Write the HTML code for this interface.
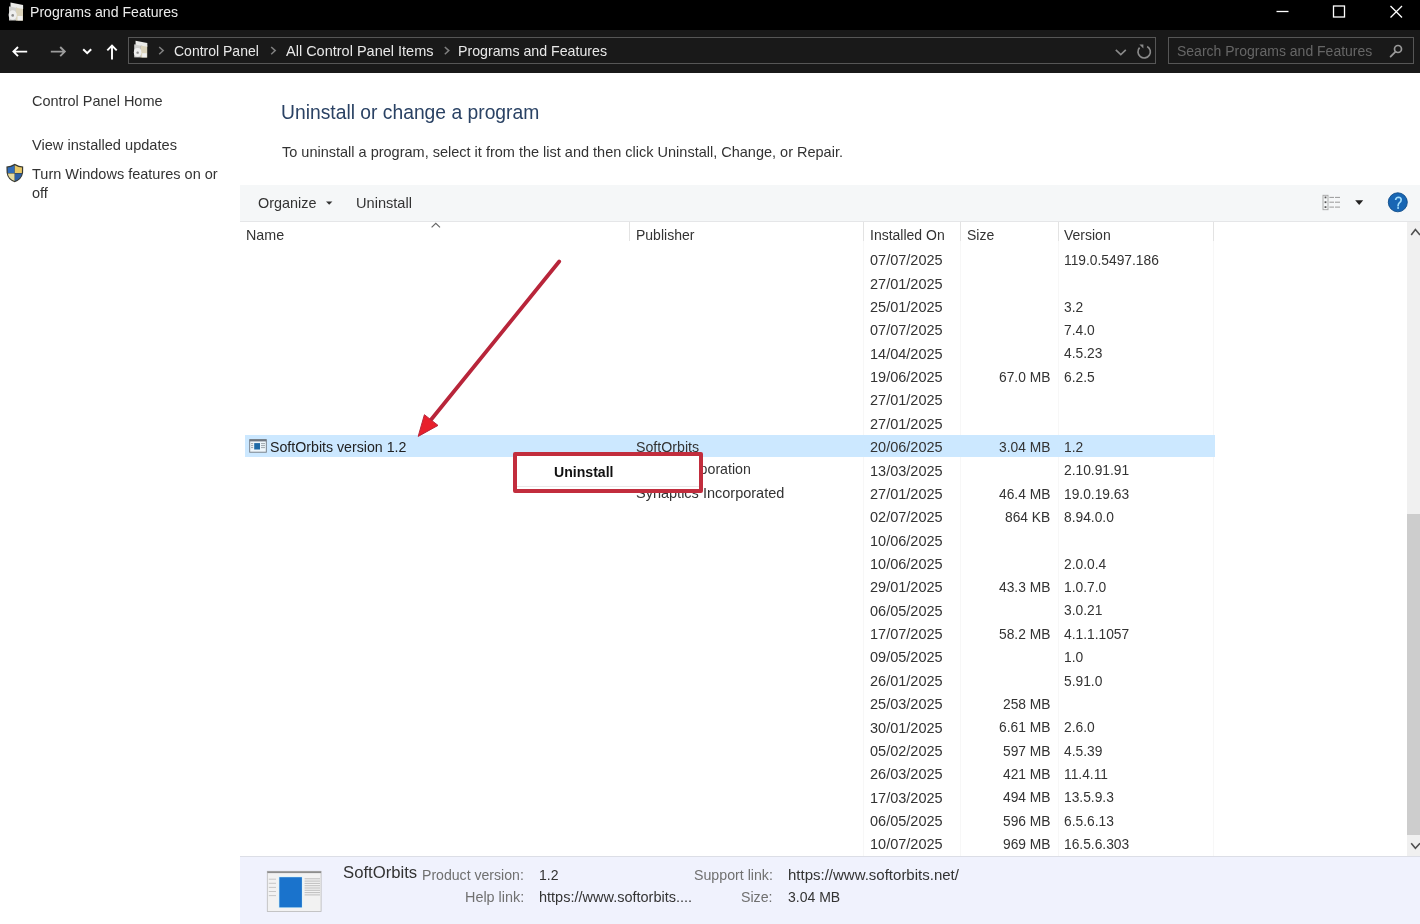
<!DOCTYPE html>
<html><head><meta charset="utf-8"><title>Programs and Features</title>
<style>
html,body{margin:0;padding:0;}
body{width:1420px;height:924px;overflow:hidden;position:relative;background:#fff;font-family:"Liberation Sans",sans-serif;}
.t{position:absolute;white-space:pre;will-change:transform;}
.r{position:absolute;}
svg{position:absolute;overflow:visible;}
</style></head><body>
<div class="r" style="left:0px;top:0px;width:1420px;height:30px;background:#000;"></div>
<div class="r" style="left:0px;top:30px;width:1420px;height:42.6px;background:#191919;"></div>
<div class="t" style="left:29.50px;top:4.21px;font-size:14.1px;line-height:17px;color:#ececec;">Programs and Features</div>
<svg style="left:0;top:0" width="1420" height="30"><line x1="1276.5" y1="11.5" x2="1288.5" y2="11.5" stroke="#fff" stroke-width="1.3"/><rect x="1333.5" y="6" width="11" height="11" fill="none" stroke="#fff" stroke-width="1.3"/><path d="M1390.5 6 L1402 17.5 M1402 6 L1390.5 17.5" stroke="#fff" stroke-width="1.3"/></svg>
<div class="r" style="left:127.5px;top:37px;width:1026px;height:25px;border:1px solid #565656;"></div>
<div class="r" style="left:1168px;top:37px;width:244px;height:25px;border:1px solid #565656;"></div>
<div class="t" style="left:174.00px;top:42.75px;font-size:14px;line-height:17px;color:#e8e8e8;">Control Panel</div>
<div class="t" style="left:286.00px;top:42.58px;font-size:14.5px;line-height:17px;color:#e8e8e8;">All Control Panel Items</div>
<div class="t" style="left:458.00px;top:42.68px;font-size:14.2px;line-height:17px;color:#e8e8e8;">Programs and Features</div>
<div class="t" style="left:1177.30px;top:42.85px;font-size:14px;line-height:17px;color:#666;">Search Programs and Features</div>
<div class="t" style="left:32.00px;top:92.58px;font-size:14.5px;line-height:17px;color:#333;">Control Panel Home</div>
<div class="t" style="left:32.00px;top:135.94px;font-size:14.6px;line-height:18px;color:#333;">View installed updates</div>
<div class="t" style="left:32.00px;top:166.08px;font-size:14.5px;line-height:17px;color:#333;">Turn Windows features on or</div>
<div class="t" style="left:32.00px;top:184.68px;font-size:14.5px;line-height:17px;color:#333;">off</div>
<div class="t" style="left:281.30px;top:101.21px;font-size:19.3px;line-height:23px;color:#2a4264;">Uninstall or change a program</div>
<div class="t" style="left:282.00px;top:143.98px;font-size:14.5px;line-height:17px;color:#333;">To uninstall a program, select it from the list and then click Uninstall, Change, or Repair.</div>
<div class="r" style="left:240px;top:184.5px;width:1180px;height:36.5px;background:#f5f7f8;"></div>
<div class="r" style="left:240px;top:221px;width:1180px;height:1px;background:#e5e6e8;"></div>
<div class="t" style="left:258.00px;top:194.91px;font-size:14.4px;line-height:17px;color:#333;">Organize</div>
<div class="t" style="left:355.60px;top:194.34px;font-size:14.6px;line-height:18px;color:#333;">Uninstall</div>
<div class="t" style="left:245.60px;top:226.95px;font-size:14.3px;line-height:17px;color:#333;">Name</div>
<div class="t" style="left:635.50px;top:227.45px;font-size:14px;line-height:17px;color:#333;">Publisher</div>
<div class="t" style="left:870.00px;top:227.05px;font-size:14px;line-height:17px;color:#333;">Installed On</div>
<div class="t" style="left:967.00px;top:227.05px;font-size:14px;line-height:17px;color:#333;">Size</div>
<div class="t" style="left:1064.00px;top:227.05px;font-size:14px;line-height:17px;color:#333;">Version</div>
<div class="r" style="left:629.1px;top:221.5px;width:1px;height:19px;background:#e3e3e3;"></div>
<div class="r" style="left:863.1px;top:221.5px;width:1px;height:19px;background:#e3e3e3;"></div>
<div class="r" style="left:863.1px;top:240.5px;width:1px;height:615px;background:#f7f7f7;"></div>
<div class="r" style="left:959.7px;top:221.5px;width:1px;height:19px;background:#e3e3e3;"></div>
<div class="r" style="left:959.7px;top:240.5px;width:1px;height:615px;background:#f7f7f7;"></div>
<div class="r" style="left:1058.1px;top:221.5px;width:1px;height:19px;background:#e3e3e3;"></div>
<div class="r" style="left:1058.1px;top:240.5px;width:1px;height:615px;background:#f7f7f7;"></div>
<div class="r" style="left:1213.1px;top:221.5px;width:1px;height:19px;background:#e3e3e3;"></div>
<div class="r" style="left:1213.1px;top:240.5px;width:1px;height:615px;background:#f7f7f7;"></div>
<div class="r" style="left:244.5px;top:435px;width:970px;height:22px;background:#cce8ff;"></div>
<div class="t" style="left:870.00px;top:252.18px;font-size:14.5px;line-height:17px;color:#333;">07/07/2025</div>
<div class="t" style="left:1064.00px;top:251.92px;font-size:13.8px;line-height:17px;color:#333;">119.0.5497.186</div>
<div class="t" style="left:870.00px;top:275.55px;font-size:14.5px;line-height:17px;color:#333;">27/01/2025</div>
<div class="t" style="left:870.00px;top:298.92px;font-size:14.5px;line-height:17px;color:#333;">25/01/2025</div>
<div class="t" style="left:1064.00px;top:298.66px;font-size:13.8px;line-height:17px;color:#333;">3.2</div>
<div class="t" style="left:870.00px;top:322.29px;font-size:14.5px;line-height:17px;color:#333;">07/07/2025</div>
<div class="t" style="left:1064.00px;top:322.03px;font-size:13.8px;line-height:17px;color:#333;">7.4.0</div>
<div class="t" style="left:870.00px;top:345.66px;font-size:14.5px;line-height:17px;color:#333;">14/04/2025</div>
<div class="t" style="left:1064.00px;top:345.40px;font-size:13.8px;line-height:17px;color:#333;">4.5.23</div>
<div class="t" style="left:870.00px;top:369.03px;font-size:14.5px;line-height:17px;color:#333;">19/06/2025</div>
<div class="t" style="right:369.50px;top:368.77px;font-size:13.8px;line-height:17px;color:#333;">67.0 MB</div>
<div class="t" style="left:1064.00px;top:368.77px;font-size:13.8px;line-height:17px;color:#333;">6.2.5</div>
<div class="t" style="left:870.00px;top:392.40px;font-size:14.5px;line-height:17px;color:#333;">27/01/2025</div>
<div class="t" style="left:870.00px;top:415.77px;font-size:14.5px;line-height:17px;color:#333;">27/01/2025</div>
<div class="t" style="left:870.00px;top:439.14px;font-size:14.5px;line-height:17px;color:#333;">20/06/2025</div>
<div class="t" style="right:369.50px;top:438.88px;font-size:13.8px;line-height:17px;color:#333;">3.04 MB</div>
<div class="t" style="left:1064.00px;top:438.88px;font-size:13.8px;line-height:17px;color:#333;">1.2</div>
<div class="t" style="left:870.00px;top:462.51px;font-size:14.5px;line-height:17px;color:#333;">13/03/2025</div>
<div class="t" style="left:1064.00px;top:462.25px;font-size:13.8px;line-height:17px;color:#333;">2.10.91.91</div>
<div class="t" style="left:870.00px;top:485.88px;font-size:14.5px;line-height:17px;color:#333;">27/01/2025</div>
<div class="t" style="right:369.50px;top:485.62px;font-size:13.8px;line-height:17px;color:#333;">46.4 MB</div>
<div class="t" style="left:1064.00px;top:485.62px;font-size:13.8px;line-height:17px;color:#333;">19.0.19.63</div>
<div class="t" style="left:870.00px;top:509.25px;font-size:14.5px;line-height:17px;color:#333;">02/07/2025</div>
<div class="t" style="right:369.50px;top:508.99px;font-size:13.8px;line-height:17px;color:#333;">864 KB</div>
<div class="t" style="left:1064.00px;top:508.99px;font-size:13.8px;line-height:17px;color:#333;">8.94.0.0</div>
<div class="t" style="left:870.00px;top:532.62px;font-size:14.5px;line-height:17px;color:#333;">10/06/2025</div>
<div class="t" style="left:870.00px;top:555.99px;font-size:14.5px;line-height:17px;color:#333;">10/06/2025</div>
<div class="t" style="left:1064.00px;top:555.73px;font-size:13.8px;line-height:17px;color:#333;">2.0.0.4</div>
<div class="t" style="left:870.00px;top:579.36px;font-size:14.5px;line-height:17px;color:#333;">29/01/2025</div>
<div class="t" style="right:369.50px;top:579.10px;font-size:13.8px;line-height:17px;color:#333;">43.3 MB</div>
<div class="t" style="left:1064.00px;top:579.10px;font-size:13.8px;line-height:17px;color:#333;">1.0.7.0</div>
<div class="t" style="left:870.00px;top:602.73px;font-size:14.5px;line-height:17px;color:#333;">06/05/2025</div>
<div class="t" style="left:1064.00px;top:602.47px;font-size:13.8px;line-height:17px;color:#333;">3.0.21</div>
<div class="t" style="left:870.00px;top:626.10px;font-size:14.5px;line-height:17px;color:#333;">17/07/2025</div>
<div class="t" style="right:369.50px;top:625.84px;font-size:13.8px;line-height:17px;color:#333;">58.2 MB</div>
<div class="t" style="left:1064.00px;top:625.84px;font-size:13.8px;line-height:17px;color:#333;">4.1.1.1057</div>
<div class="t" style="left:870.00px;top:649.47px;font-size:14.5px;line-height:17px;color:#333;">09/05/2025</div>
<div class="t" style="left:1064.00px;top:649.21px;font-size:13.8px;line-height:17px;color:#333;">1.0</div>
<div class="t" style="left:870.00px;top:672.84px;font-size:14.5px;line-height:17px;color:#333;">26/01/2025</div>
<div class="t" style="left:1064.00px;top:672.58px;font-size:13.8px;line-height:17px;color:#333;">5.91.0</div>
<div class="t" style="left:870.00px;top:696.21px;font-size:14.5px;line-height:17px;color:#333;">25/03/2025</div>
<div class="t" style="right:369.50px;top:695.95px;font-size:13.8px;line-height:17px;color:#333;">258 MB</div>
<div class="t" style="left:870.00px;top:719.58px;font-size:14.5px;line-height:17px;color:#333;">30/01/2025</div>
<div class="t" style="right:369.50px;top:719.32px;font-size:13.8px;line-height:17px;color:#333;">6.61 MB</div>
<div class="t" style="left:1064.00px;top:719.32px;font-size:13.8px;line-height:17px;color:#333;">2.6.0</div>
<div class="t" style="left:870.00px;top:742.95px;font-size:14.5px;line-height:17px;color:#333;">05/02/2025</div>
<div class="t" style="right:369.50px;top:742.69px;font-size:13.8px;line-height:17px;color:#333;">597 MB</div>
<div class="t" style="left:1064.00px;top:742.69px;font-size:13.8px;line-height:17px;color:#333;">4.5.39</div>
<div class="t" style="left:870.00px;top:766.32px;font-size:14.5px;line-height:17px;color:#333;">26/03/2025</div>
<div class="t" style="right:369.50px;top:766.06px;font-size:13.8px;line-height:17px;color:#333;">421 MB</div>
<div class="t" style="left:1064.00px;top:766.06px;font-size:13.8px;line-height:17px;color:#333;">11.4.11</div>
<div class="t" style="left:870.00px;top:789.69px;font-size:14.5px;line-height:17px;color:#333;">17/03/2025</div>
<div class="t" style="right:369.50px;top:789.43px;font-size:13.8px;line-height:17px;color:#333;">494 MB</div>
<div class="t" style="left:1064.00px;top:789.43px;font-size:13.8px;line-height:17px;color:#333;">13.5.9.3</div>
<div class="t" style="left:870.00px;top:813.06px;font-size:14.5px;line-height:17px;color:#333;">06/05/2025</div>
<div class="t" style="right:369.50px;top:812.80px;font-size:13.8px;line-height:17px;color:#333;">596 MB</div>
<div class="t" style="left:1064.00px;top:812.80px;font-size:13.8px;line-height:17px;color:#333;">6.5.6.13</div>
<div class="t" style="left:870.00px;top:836.43px;font-size:14.5px;line-height:17px;color:#333;">10/07/2025</div>
<div class="t" style="right:369.50px;top:836.17px;font-size:13.8px;line-height:17px;color:#333;">969 MB</div>
<div class="t" style="left:1064.00px;top:836.17px;font-size:13.8px;line-height:17px;color:#333;">16.5.6.303</div>
<div class="t" style="left:270.40px;top:438.64px;font-size:14.2px;line-height:17px;color:#222;">SoftOrbits version 1.2</div>
<div class="t" style="left:636.30px;top:438.64px;font-size:14.2px;line-height:17px;color:#333;">SoftOrbits</div>
<div class="t" style="right:669.00px;top:461.41px;font-size:14.2px;line-height:17px;color:#333;">Intel Corporation</div>
<div class="t" style="left:636.30px;top:484.68px;font-size:14.5px;line-height:17px;color:#333;">Synaptics Incorporated</div>
<div class="r" style="left:240px;top:856px;width:1180px;height:68px;background:#f0f2fd;"></div>
<div class="r" style="left:240px;top:856px;width:1180px;height:1px;background:#dcdee6;"></div>
<div class="t" style="left:343.20px;top:863.41px;font-size:16.7px;line-height:20px;color:#333;">SoftOrbits</div>
<div class="t" style="right:895.90px;top:866.61px;font-size:14.1px;line-height:17px;color:#707070;">Product version:</div>
<div class="t" style="left:538.50px;top:866.65px;font-size:14px;line-height:17px;color:#333;">1.2</div>
<div class="t" style="right:895.90px;top:888.81px;font-size:14.4px;line-height:17px;color:#707070;">Help link:</div>
<div class="t" style="left:538.50px;top:888.78px;font-size:14.5px;line-height:17px;color:#333;">https://www.softorbits....</div>
<div class="t" style="right:647.00px;top:866.58px;font-size:14.2px;line-height:17px;color:#707070;">Support link:</div>
<div class="t" style="left:787.80px;top:865.80px;font-size:15px;line-height:18px;color:#333;">https://www.softorbits.net/</div>
<div class="t" style="right:647.00px;top:888.88px;font-size:14.2px;line-height:17px;color:#707070;">Size:</div>
<div class="t" style="left:787.80px;top:888.95px;font-size:14px;line-height:17px;color:#333;">3.04 MB</div>
<div class="r" style="left:1406.5px;top:222px;width:13.5px;height:634px;background:#f0f0f0;"></div>
<div class="r" style="left:1406.5px;top:514px;width:13.5px;height:321px;background:#cdcdcd;"></div>
<svg style="left:0;top:0" width="1420" height="924"><g transform="translate(7.5,2) scale(1.0)"><rect x="1.5" y="4.5" width="7.2" height="14" fill="#cfcfcd"/><rect x="8.5" y="5.5" width="7" height="13.2" fill="#dbd3bb"/><path d="M3 0.6 L15.6 3 L15.6 7 L3 4.8 Z" fill="#ebebe9"/><ellipse cx="5.2" cy="13" rx="4.1" ry="4.7" fill="#eeeeee"/><circle cx="5.2" cy="13.4" r="1.3" fill="#8a8a8a"/><rect x="10" y="14" width="5" height="4.4" fill="#f0f0f0"/></g><g transform="translate(132.8,40.2) scale(0.93)"><rect x="1.5" y="4.5" width="7.2" height="14" fill="#cfcfcd"/><rect x="8.5" y="5.5" width="7" height="13.2" fill="#dbd3bb"/><path d="M3 0.6 L15.6 3 L15.6 7 L3 4.8 Z" fill="#ebebe9"/><ellipse cx="5.2" cy="13" rx="4.1" ry="4.7" fill="#eeeeee"/><circle cx="5.2" cy="13.4" r="1.3" fill="#8a8a8a"/><rect x="10" y="14" width="5" height="4.4" fill="#f0f0f0"/></g><path d="M27.2 51.6 H13.6 M18 47 L13.4 51.6 L18 56.2" fill="none" stroke="#fff" stroke-width="1.9"/><path d="M50.8 51.6 H64.6 M60.2 47 L64.8 51.6 L60.2 56.2" fill="none" stroke="#9c9c9c" stroke-width="1.9"/><path d="M83.2 49.2 L87.2 53.2 L91.2 49.2" fill="none" stroke="#fff" stroke-width="2"/><path d="M112 59.6 V45.4 M107.3 50.4 L112 45.5 L116.7 50.4" fill="none" stroke="#fff" stroke-width="1.9"/><path d="M159.2 47 L163.2 50.6 L159.2 54.2" fill="none" stroke="#808080" stroke-width="1.5"/><path d="M271.2 47 L275.2 50.6 L271.2 54.2" fill="none" stroke="#808080" stroke-width="1.5"/><path d="M444.8 47 L448.8 50.6 L444.8 54.2" fill="none" stroke="#808080" stroke-width="1.5"/><path d="M1115.8 49.8 L1120.8 54.6 L1125.8 49.8" fill="none" stroke="#8a8a8a" stroke-width="1.6"/><path d="M1147.2 46.4 A6.2 6.2 0 1 1 1139.6 47.6" fill="none" stroke="#8a8a8a" stroke-width="1.7"/><path d="M1139.4 44.6 L1143.4 44.6 L1143.4 48.6 Z" fill="#8a8a8a"/><circle cx="1398" cy="49" r="3.5" fill="none" stroke="#9a9a9a" stroke-width="1.7"/><path d="M1395.6 51.6 L1390.6 56.6" stroke="#9a9a9a" stroke-width="1.8" stroke-linecap="round"/><path d="M14.7 163.8 Q10.5 166.3 6.4 166.6 L6.6 172.8 Q7.4 179.6 14.7 182.3 Q22 179.6 23.1 172.8 L23.2 166.6 Q19 166.3 14.7 163.8 Z" fill="#3a3a30"/><path d="M14.6 165.2 Q11 167.4 7.6 167.6 L7.8 173 L14.6 173 Z" fill="#2f6bb8"/><path d="M14.8 165.2 Q18.4 167.4 22 167.6 L21.9 173 L14.8 173 Z" fill="#e7c766"/><path d="M7.8 173.4 L14.6 173.4 L14.6 181 Q8.6 178.6 7.8 173.4 Z" fill="#e6dba0"/><path d="M21.9 173.4 L14.8 173.4 L14.8 181 Q21 178.6 21.9 173.4 Z" fill="#2e5ea3"/><path d="M326 201.6 L332.4 201.6 L329.2 204.8 Z" fill="#333"/><path d="M431.6 227.4 L435.8 223.4 L440 227.4" fill="none" stroke="#666" stroke-width="1.2"/><rect x="1323" y="195.3" width="5" height="14.4" fill="none" stroke="#a5a5a5" stroke-width="0.9"/><rect x="1324.6" y="196.5" width="1.8" height="1.8" fill="#555"/><path d="M1329.4 197.4 H1334 M1335 197.4 H1340" stroke="#999" stroke-width="1"/><rect x="1324.6" y="201.29999999999998" width="1.8" height="1.8" fill="#555"/><path d="M1329.4 202.2 H1334 M1335 202.2 H1340" stroke="#999" stroke-width="1"/><rect x="1324.6" y="206.2" width="1.8" height="1.8" fill="#555"/><path d="M1329.4 207.1 H1334 M1335 207.1 H1340" stroke="#999" stroke-width="1"/><path d="M1355.2 200.3 L1363.2 200.3 L1359.2 204.9 Z" fill="#222"/><circle cx="1397.8" cy="202.3" r="9.5" fill="#1866b4" stroke="#0f4c88" stroke-width="0.9"/><path d="M1395.6 200 Q1395.9 197.2 1398.5 197.2 Q1401.2 197.3 1401.2 199.7 Q1401.2 201.5 1399.3 202.8 Q1398.2 203.7 1398.1 205.6 L1398.1 206.4" fill="none" stroke="#a4e0ff" stroke-width="1.6"/><circle cx="1398.1" cy="208" r="0.95" fill="#a4e0ff"/><path d="M1411.2 234.9 L1415.4 229.6 L1420 234.9" fill="none" stroke="#505050" stroke-width="1.6"/><path d="M1411.2 843.3 L1415.4 848.2 L1420 843.3" fill="none" stroke="#505050" stroke-width="1.6"/><rect x="249.7" y="439.6" width="16.6" height="12.6" fill="#eef6fb" stroke="#6f7780" stroke-width="0.9"/><rect x="249.7" y="439.6" width="16.6" height="1.8" fill="#6f7780"/><rect x="254.2" y="443.1" width="5.8" height="6.4" fill="#1f6aa6"/><path d="M251 443.6 H253.2 M261 443.6 H265" stroke="#8a9097" stroke-width="0.8"/><path d="M251 445.6 H253.2 M261 445.6 H265" stroke="#8a9097" stroke-width="0.8"/><path d="M251 447.6 H253.2 M261 447.6 H265" stroke="#8a9097" stroke-width="0.8"/><rect x="267.3" y="871.3" width="53.8" height="40.2" fill="#f2f2f2" stroke="#b9b9b9" stroke-width="0.8"/><rect x="267.3" y="871.3" width="53.8" height="1.8" fill="#8d8d8d"/><rect x="278.4" y="876.4" width="24.2" height="31.6" fill="#d9f3fb"/><rect x="279.3" y="877.2" width="22.6" height="30.2" fill="#1a73cc"/><path d="M304.6 878.8 H320" stroke="#a9a9a9" stroke-width="0.7"/><path d="M304.6 881.1 H320" stroke="#a9a9a9" stroke-width="0.7"/><path d="M304.6 883.4 H320" stroke="#a9a9a9" stroke-width="0.7"/><path d="M304.6 885.7 H320" stroke="#a9a9a9" stroke-width="0.7"/><path d="M304.6 888.0 H320" stroke="#a9a9a9" stroke-width="0.7"/><path d="M304.6 890.3 H320" stroke="#a9a9a9" stroke-width="0.7"/><path d="M304.6 892.6 H320" stroke="#a9a9a9" stroke-width="0.7"/><path d="M304.6 894.9 H320" stroke="#a9a9a9" stroke-width="0.7"/><path d="M268.8 879.2 H276" stroke="#b5b5b5" stroke-width="0.7"/><path d="M268.8 883.3 H276" stroke="#b5b5b5" stroke-width="0.7"/><path d="M268.8 887.4 H276" stroke="#b5b5b5" stroke-width="0.7"/><path d="M268.8 891.5 H276" stroke="#b5b5b5" stroke-width="0.7"/><path d="M268.8 895.6 H276" stroke="#b5b5b5" stroke-width="0.7"/></svg>
<div class="r" style="left:512.5px;top:451.5px;width:182px;height:33.5px;background:#fff;border:4px solid #c22d3d;border-radius:2px;"></div>
<div class="r" style="left:516.5px;top:486px;width:182px;height:1px;background:#e9e9e9;"></div>
<div class="t" style="left:553.80px;top:463.51px;font-size:14.1px;line-height:17px;color:#111;font-weight:bold;">Uninstall</div>
<svg style="left:0;top:0" width="1420" height="924"><line x1="559.2" y1="261.5" x2="430" y2="421" stroke="#b8253a" stroke-width="3.8" stroke-linecap="round"/><path d="M418.2 436.4 L424.4 414.7 L438 425.4 Z" fill="#e81f2b" stroke="#b8253a" stroke-width="1"/></svg>
</body></html>
